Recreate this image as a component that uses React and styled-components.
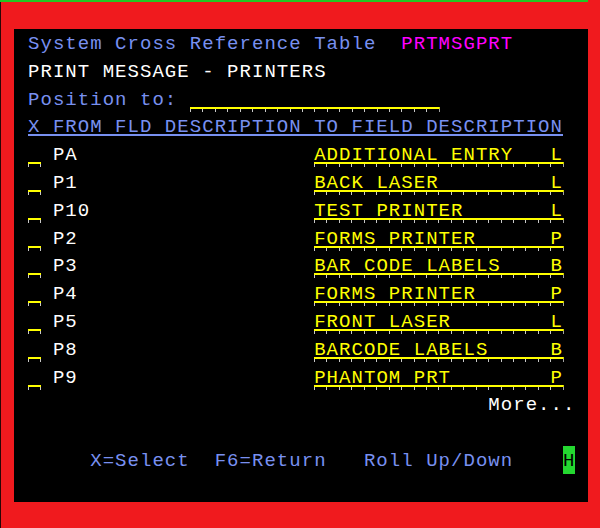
import React from "react";
import styled, { createGlobalStyle } from "styled-components";

// one terminal cell: 19px Liberation Mono (11.4px advance) + letter spacing
const CELL = 12.44;
const ROW = 27.8;

const GlobalStyle = createGlobalStyle`
  html, body {
    margin: 0;
    padding: 0;
    background: #f01a1e;
    overflow: hidden;
  }
`;

const Frame = styled.div`
  width: 600px;
  height: 528px;
  box-sizing: border-box;
  background: #f01a1e;
  border-left: 1px solid #2a0606;
  display: flex;
  flex-direction: column;
`;

const TopLine = styled.div`
  width: 588px;
  height: 2px;
  margin-left: -1px;
  margin-bottom: 27px;
  background: #22c822;
`;

const Screen = styled.div`
  width: 574px;
  height: 473px;
  margin-left: 13px;
  box-sizing: border-box;
  padding-left: 14px;
  background: #000;
  font-family: "Liberation Mono", "DejaVu Sans Mono", monospace;
  font-size: 19px;
  letter-spacing: 1.04px;
  color: #fff;
`;

// taller line box than the row so the glyphs sit a little lower, like the emulator
const Line = styled.div`
  height: ${ROW}px;
  line-height: ${ROW + 3}px;
  white-space: pre;
  display: flex;
  align-items: stretch;
`;

const Txt = styled.span`
  color: ${(p) => p.$color || "#fff"};
  ${(p) =>
    p.$underline &&
    `
    text-decoration: underline;
    text-decoration-thickness: 2px;
    text-underline-offset: 2px;
  `}
`;

const colors = {
  blue: "#7890f0",
  white: "#ffffff",
  pink: "#ff00ff",
  yellow: "#ffff00",
};

// input field: yellow underline with grey column-separator ticks under it
const Field = styled.span`
  display: inline-block;
  width: ${(p) => p.$cells * CELL + 1}px;
  margin-right: -1px;
  height: ${ROW}px;
  color: ${colors.yellow};
  background-image: linear-gradient(${colors.yellow}, ${colors.yellow}),
    repeating-linear-gradient(
      to right,
      #c8c8c8 0 1px,
      transparent 1px ${CELL}px
    );
  background-repeat: no-repeat;
  background-size: ${(p) => p.$cells * CELL + 1}px 2px,
    ${(p) => p.$cells * CELL + 1}px 3px;
  background-position: 0 22px, 0 24px;
`;

const Cursor = styled.span`
  display: inline-block;
  width: ${CELL}px;
  background: #24d830;
  color: #000;
  text-align: left;
`;

const printers = [
  ["PA", "ADDITIONAL ENTRY", "L"],
  ["P1", "BACK LASER", "L"],
  ["P10", "TEST PRINTER", "L"],
  ["P2", "FORMS PRINTER", "P"],
  ["P3", "BAR CODE LABELS", "B"],
  ["P4", "FORMS PRINTER", "P"],
  ["P5", "FRONT LASER", "L"],
  ["P8", "BARCODE LABELS", "B"],
  ["P9", "PHANTOM PRT", "P"],
];

function App() {
  return (
    <Frame>
      <GlobalStyle />
      <TopLine />
      <Screen>
        <Line>
          <Txt $color={colors.blue}>{"System Cross Reference Table  "}</Txt>
          <Txt $color={colors.pink}>PRTMSGPRT</Txt>
        </Line>
        <Line>
          <Txt>PRINT MESSAGE - PRINTERS</Txt>
        </Line>
        <Line>
          <Txt $color={colors.blue}>{"Position to: "}</Txt>
          <Field $cells={20} />
        </Line>
        <Line>
          <Txt $color={colors.blue} $underline>
            X FROM FLD DESCRIPTION TO FIELD DESCRIPTION
          </Txt>
        </Line>
        {printers.map(([code, desc, type]) => (
          <Line key={code}>
            <Field $cells={1} />
            <Txt>{" " + code.padEnd(21)}</Txt>
            <Field $cells={20}>{desc.padEnd(19) + type}</Field>
          </Line>
        ))}
        <Line>
          <Txt>{" ".repeat(37) + "More..."}</Txt>
        </Line>
        <Line />
        <Line>
          <Txt $color={colors.blue}>
            {"     X=Select  F6=Return   Roll Up/Down    "}
          </Txt>
          <Cursor>H</Cursor>
        </Line>
        <Line />
      </Screen>
    </Frame>
  );
}

export default App;
